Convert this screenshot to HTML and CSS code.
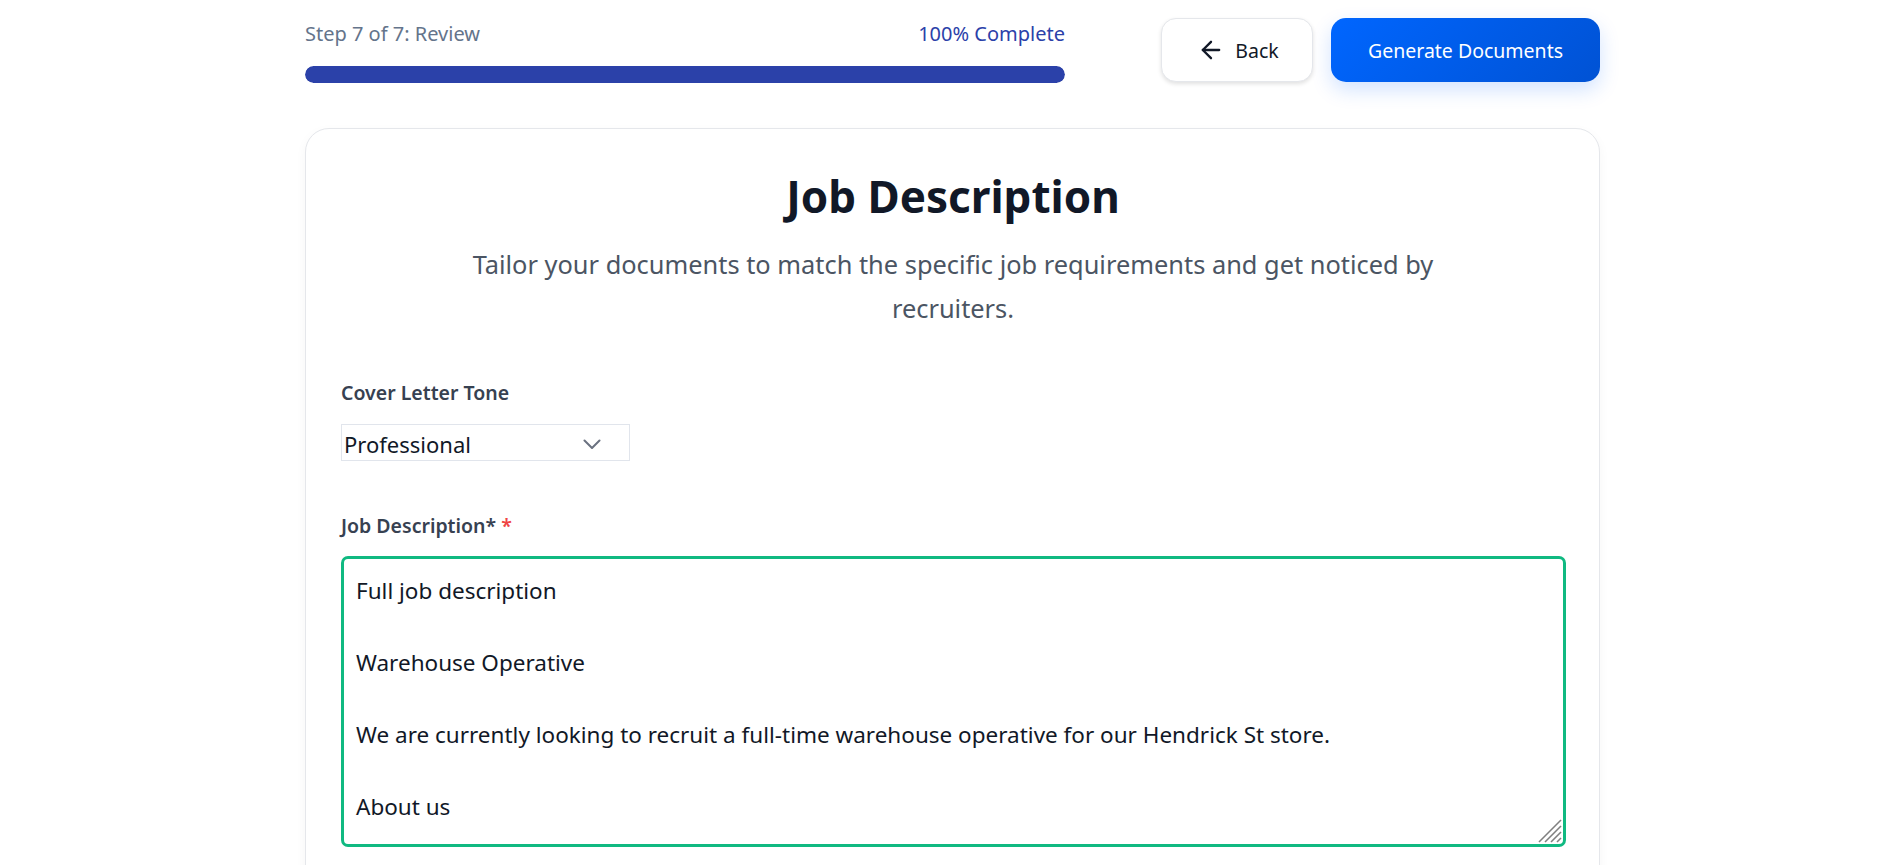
FILE: index.html
```html
<!DOCTYPE html>
<html lang="en">
<head>
<meta charset="utf-8">
<title>Job Description</title>
<link rel="stylesheet" href="styles.css">
</head>
<body>
<div class="page">
  <header class="topbar">
    <div class="progress">
      <div class="progress-meta">
        <span class="step">Step 7 of 7: Review</span>
        <span class="pct">100% Complete</span>
      </div>
      <div class="track"><div class="fill"></div></div>
    </div>
    <div class="actions">
      <button class="btn btn-back" type="button">
        <svg class="arrow" width="28" height="28" viewBox="0 0 24 24" fill="none" stroke="currentColor" stroke-width="2" stroke-linecap="round" stroke-linejoin="round"><path d="M19 12H5"/><path d="M12 19l-7-7 7-7"/></svg>
        <span>Back</span>
      </button>
      <button class="btn btn-primary" type="button">Generate Documents</button>
    </div>
  </header>

  <main class="card">
    <h1 class="title">Job Description</h1>
    <p class="subtitle">Tailor your documents to match the specific job requirements and get noticed by recruiters.</p>

    <div class="field">
      <label class="label">Cover Letter Tone</label>
      <div class="select" role="combobox">
        <span class="select-value">Professional</span>
        <svg class="chev" width="18" height="10" viewBox="0 0 18 10" fill="none" stroke="currentColor" stroke-width="2" stroke-linecap="round" stroke-linejoin="round"><path d="M1.5 1.5l7.5 7.5 7.5-7.5"/></svg>
      </div>
    </div>

    <div class="field field-jd">
      <label class="label">Job Description* <span class="req">*</span></label>
      <div class="jd-wrap">
        <textarea class="jd">Full job description

Warehouse Operative

We are currently looking to recruit a full-time warehouse operative for our Hendrick St store.

About us</textarea>
        <svg class="grip" width="24" height="24" viewBox="0 0 24 24" fill="none" stroke="#808080" stroke-width="1.6" stroke-linecap="butt"><path d="M1 23L23 1"/><path d="M7 23L23 7"/><path d="M13 23L23 13"/><path d="M19 23L23 19"/></svg>
      </div>
    </div>
  </main>
</div>
</body>
</html>
```
FILE: styles.css
```css
* { box-sizing: border-box; }
html, body { margin: 0; padding: 0; background: #ffffff; overflow: hidden; }
body {
  font-family: "Noto Sans", "Open Sans", sans-serif;
  color: #111827;
}
.page {
  width: 1295px;
  margin-left: 305px;
  height: 865px;
}
.topbar {
  display: flex;
  justify-content: space-between;
  align-items: flex-start;
  padding-top: 18px;
}
.progress {
  width: 760px;
  padding-top: 2px;
}
.progress-meta {
  display: flex;
  justify-content: space-between;
  font-size: 20px;
  line-height: 28px;
}
.step { color: #64748b; }
.pct { color: #2b41a9; }
.track {
  margin-top: 18px;
  height: 17px;
  border-radius: 999px;
  background: #e5e7eb;
  overflow: hidden;
}
.fill { width: 100%; height: 100%; background: #2b41a9; border-radius: 999px; }

.actions { display: flex; gap: 18px; }
.btn {
  height: 64px;
  border-radius: 15px;
  font-family: inherit;
  font-size: 19.5px;
  cursor: pointer;
  display: inline-flex;
  align-items: center;
  justify-content: center;
}
.btn-back {
  width: 152px;
  background: #ffffff;
  color: #111827;
  border: 1px solid #e5e7eb;
  box-shadow: 0 2px 4px rgba(0,0,0,0.12);
  gap: 10px;
  padding: 0 0 0 2px;
}
.arrow { color: #111827; }
.btn-primary {
  width: 269px;
  border: none;
  color: #ffffff;
  background: linear-gradient(135deg, #0066ff 0%, #0052d4 100%);
  box-shadow: 0 8px 20px rgba(0, 102, 255, 0.18);
}

.card {
  margin-top: 45px;
  border: 1px solid #e5e7eb;
  border-radius: 24px;
  box-shadow: 0 4px 12px rgba(0,0,0,0.04);
  padding: 42px 34px 40px 35px;
  min-height: 900px;
  background: #ffffff;
}
.title {
  margin: 0;
  text-align: center;
  font-size: 44px;
  line-height: 50px;
  font-weight: 700;
  color: #111827;
}
.subtitle {
  margin: 22px auto 0;
  max-width: 1000px;
  text-align: center;
  font-size: 25.4px;
  line-height: 43.5px;
  color: #4b5563;
}
.field { margin-top: 49px; }
.field-jd { margin-top: 51px; }
.label {
  display: block;
  font-size: 19.5px;
  line-height: 28px;
  font-weight: 600;
  color: #374151;
}
.req { color: #ef4444; }
.select {
  margin-top: 17px;
  width: 289px;
  height: 37px;
  border: 1px solid #e1e5ec;
  display: flex;
  align-items: center;
  justify-content: space-between;
  padding: 2px 28px 0 2px;
}
.select-value { font-size: 22px; color: #111827; }
.chev { color: #6b7280; }
.jd-wrap {
  position: relative;
  margin-top: 16px;
  width: 1225px;
}
.jd {
  display: block;
  width: 1225px;
  height: 291px;
  border: 3px solid #10b981;
  border-radius: 7px;
  padding: 14px 12px;
  font-family: inherit;
  font-size: 22.5px;
  line-height: 36px;
  color: #111827;
  background: #ffffff;
  outline: none;
  resize: none;
  overflow: hidden;
}
.grip {
  position: absolute;
  right: 4px;
  bottom: 4px;
  pointer-events: none;
}
```
